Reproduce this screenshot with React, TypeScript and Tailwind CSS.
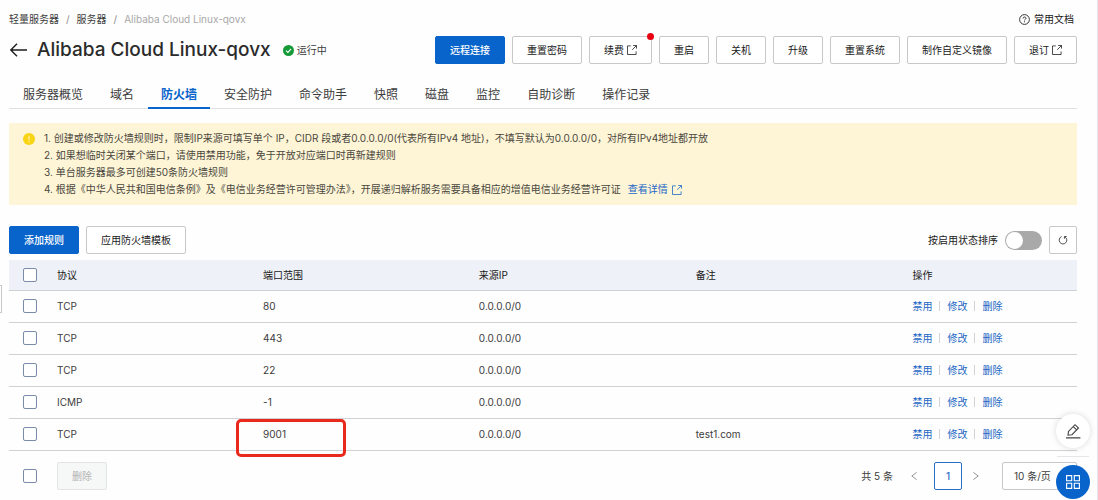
import React from "react";

type Rule = { protocol: string; port: string; source: string; remark: string; marked?: boolean };

const rules: Rule[] = [
  { protocol: "TCP", port: "80", source: "0.0.0.0/0", remark: "" },
  { protocol: "TCP", port: "443", source: "0.0.0.0/0", remark: "" },
  { protocol: "TCP", port: "22", source: "0.0.0.0/0", remark: "" },
  { protocol: "ICMP", port: "-1", source: "0.0.0.0/0", remark: "" },
  { protocol: "TCP", port: "9001", source: "0.0.0.0/0", remark: "test1.com", marked: true },
];

const tabs = ["服务器概览", "域名", "防火墙", "安全防护", "命令助手", "快照", "磁盘", "监控", "自助诊断", "操作记录"];

function ExternalIcon() {
  return (
    <svg className="size-[10px] shrink-0" viewBox="0 0 10 10" fill="none" stroke="currentColor" strokeWidth="0.8" aria-hidden="true">
      <path d="M3.8 0.9H0.5V9.5H9.1V6.4M6.2 0.5H9.5V3.6M9.5 0.5L5.2 4.8" />
    </svg>
  );
}

function Button({
  children,
  primary = false,
  external = false,
  dot = false,
}: {
  children: React.ReactNode;
  primary?: boolean;
  external?: boolean;
  dot?: boolean;
}) {
  return (
    <button
      type="button"
      className={
        primary
          ? "flex h-7 shrink-0 items-center rounded-xs border border-[#0864cb] bg-[#0864cb] px-3.5 font-medium text-white"
          : "relative flex h-7 shrink-0 items-center gap-[3px] rounded-xs border border-[#c8c8ca] bg-white px-3.5 text-[#202020]"
      }
    >
      {children}
      {external && <ExternalIcon />}
      {dot && <span className="absolute -top-1 -right-[3px] size-[7px] rounded-full bg-[#e60012]" />}
    </button>
  );
}

function Checkbox({ label }: { label: string }) {
  return (
    <input
      type="checkbox"
      aria-label={label}
      className="block size-3.5 appearance-none rounded-xs border border-[#7c8ba8] bg-white checked:bg-[#0864cb]"
    />
  );
}

function RowActions() {
  return (
    <div className="flex items-center gap-[7px] text-[#1c66c4]">
      <a href="#disable">禁用</a>
      <span className="h-2.5 w-px bg-[#d3d3d6]" />
      <a href="#edit">修改</a>
      <span className="h-2.5 w-px bg-[#d3d3d6]" />
      <a href="#delete">删除</a>
    </div>
  );
}

export default function App() {
  return (
    <div className="relative min-h-screen border-r border-[#e6e6ea] bg-[#fefefe] pr-5 pb-2 pl-[9px] font-[Inter,'Noto_Sans_CJK_SC',sans-serif] text-[10px] leading-4 text-[#3c3c3c]">
      <div className="absolute top-[285px] left-0 h-7 w-0.5 border-y border-r border-[#c8c8ca]" />

      <div className="flex items-center justify-between pt-[11px]">
        <nav aria-label="导航路径" className="flex items-center gap-[7px]">
          <a href="#swas">轻量服务器</a>
          <span className="text-[#8a8a8a]">/</span>
          <a href="#servers">服务器</a>
          <span className="text-[#8a8a8a]">/</span>
          <span className="text-[#a8a8a8]">Alibaba Cloud Linux-qovx</span>
        </nav>
        <a href="#docs" className="flex items-center gap-1 pr-[3px] text-[#202020]">
          <svg className="size-[11px]" viewBox="0 0 11 11" fill="none" stroke="currentColor" strokeWidth="0.9" aria-hidden="true">
            <circle cx="5.5" cy="5.5" r="4.9" />
            <path d="M4 4.5C4 3.5 4.7 3 5.5 3S7 3.5 7 4.3C7 5.2 5.5 5.3 5.5 6.4M5.5 7.3V8.3" />
          </svg>
          常用文档
        </a>
      </div>

      <header className="mt-[9px] flex items-center justify-between">
        <div className="flex items-center">
          <button type="button" aria-label="返回" className="text-[#1c1c1c]">
            <svg className="h-3.5 w-[18px]" viewBox="0 0 18 14" fill="none" stroke="currentColor" strokeWidth="1.4" aria-hidden="true">
              <path d="M18 7H2M8 0.8L1.8 7L8 13.2" />
            </svg>
          </button>
          <h1 className="ml-2.5 text-[19px] leading-7 font-medium text-[#2b2b2b]">Alibaba Cloud Linux-qovx</h1>
          <svg className="ml-3 size-[11px]" viewBox="0 0 11 11" aria-hidden="true">
            <circle cx="5.5" cy="5.5" r="5.5" fill="#159a38" />
            <path d="M3 5.6L4.9 7.4L8.1 3.9" fill="none" stroke="#fff" strokeWidth="1.1" />
          </svg>
          <span className="ml-[3px]">运行中</span>
        </div>
        <div className="flex items-center gap-[7px]">
          <Button primary>远程连接</Button>
          <Button>重置密码</Button>
          <Button external dot>续费</Button>
          <Button>重启</Button>
          <Button>关机</Button>
          <Button>升级</Button>
          <Button>重置系统</Button>
          <Button>制作自定义镜像</Button>
          <Button external>退订</Button>
        </div>
      </header>

      <nav aria-label="服务器功能" className="mt-4 flex gap-px border-b border-[#e0e0e2] pl-px text-xs leading-4">
        {tabs.map((tab) => (
          <a
            key={tab}
            href={`#${tab}`}
            className={
              tab === "防火墙"
                ? "-mb-px border-b-2 border-[#0864cb] px-[13px] pt-[7px] pb-1 font-bold text-[#0864cb]"
                : "-mb-px border-b-2 border-transparent px-[13px] pt-[7px] pb-1"
            }
          >
            {tab}
          </a>
        ))}
      </nav>

      <section className="mt-3.5 flex bg-[#fef5d6] px-3.5 py-[7px] leading-[17px] text-[#4a473e]">
        <svg className="mt-[3px] size-3 shrink-0" viewBox="0 0 12 12" aria-hidden="true">
          <circle cx="6" cy="6" r="6" fill="#f8d414" />
          <path d="M6 2.7V6.9M6 8.1V9.3" stroke="#fff3bd" strokeWidth="1.1" />
        </svg>
        <ol className="ml-[9px]">
          <li>1. 创建或修改防火墙规则时，限制IP来源可填写单个 IP，CIDR 段或者0.0.0.0/0(代表所有IPv4 地址)，不填写默认为0.0.0.0/0，对所有IPv4地址都开放</li>
          <li>2. 如果想临时关闭某个端口，请使用禁用功能，免于开放对应端口时再新建规则</li>
          <li>3. 单台服务器最多可创建50条防火墙规则</li>
          <li className="flex items-center">
            4. 根据《中华人民共和国电信条例》及《电信业务经营许可管理办法》，开展递归解析服务需要具备相应的增值电信业务经营许可证
            <a href="#details" className="ml-[7px] flex items-center gap-1 text-[#1c68c8]">
              查看详情
              <ExternalIcon />
            </a>
          </li>
        </ol>
      </section>

      <div className="mt-[21px] flex items-center justify-between">
        <div className="flex gap-[7px]">
          <Button primary>添加规则</Button>
          <Button>应用防火墙模板</Button>
        </div>
        <div className="flex items-center gap-[7px]">
          <label htmlFor="sort-enabled" className="text-[#202020]">按启用状态排序</label>
          <input
            id="sort-enabled"
            type="checkbox"
            role="switch"
            className="h-[19px] w-[37px] appearance-none rounded-full bg-[#a9a9a9] p-px before:block before:size-[17px] before:rounded-full before:bg-white before:content-[''] checked:bg-[#0864cb] checked:before:ml-auto"
          />
          <button type="button" aria-label="刷新" className="flex size-7 items-center justify-center rounded-xs border border-[#c8c8ca] bg-white text-[#3c3c3c]">
            <svg className="size-2.5" viewBox="0 0 10 10" fill="none" stroke="currentColor" strokeWidth="0.9" aria-hidden="true">
              <path d="M3.6 1.6A3.8 3.8 0 1 0 6.8 1.8M6.4 3.7V1.5H8.6" />
            </svg>
          </button>
        </div>
      </div>

      <table className="mt-1.5 w-full table-fixed border-collapse text-left">
        <colgroup>
          <col className="w-[34px]" />
          <col className="w-[19.3%]" />
          <col className="w-[20.2%]" />
          <col className="w-[20.3%]" />
          <col className="w-[20.3%]" />
          <col />
        </colgroup>
        <thead>
          <tr className="h-[30px] border-b border-[#d0d1d5] bg-[#eef1f7] text-[#202020]">
            <th className="pl-3.5"><Checkbox label="全选" /></th>
            <th className="px-3.5 font-normal">协议</th>
            <th className="px-3.5 font-normal">端口范围</th>
            <th className="px-3.5 font-normal">来源IP</th>
            <th className="px-3.5 font-normal">备注</th>
            <th className="px-3.5 font-normal">操作</th>
          </tr>
        </thead>
        <tbody>
          {rules.map((rule) => (
            <tr key={rule.port} className="h-8 border-b border-[#d0d1d5]">
              <td className="pl-3.5"><Checkbox label={`选择端口 ${rule.port}`} /></td>
              <td className="px-3.5">{rule.protocol}</td>
              <td className="relative px-3.5">
                {rule.port}
                {rule.marked && (
                  <span className="pointer-events-none absolute top-0 -left-[13px] h-[38px] w-[110px] rounded-[5px] border-[3px] border-[#e8291c]" />
                )}
              </td>
              <td className="px-3.5">{rule.source}</td>
              <td className="px-3.5">{rule.remark}</td>
              <td className="px-3.5"><RowActions /></td>
            </tr>
          ))}
        </tbody>
      </table>

      <footer className="mt-[11px] flex items-center justify-between pl-3.5">
        <div className="flex items-center gap-5">
          <Checkbox label="选择全部规则" />
          <button type="button" disabled className="h-7 rounded-xs border border-[#e3e4e6] bg-[#f6f7f7] px-3.5 text-[#b4b4b4]">删除</button>
        </div>
        <div className="flex items-center">
          <span>共 5 条</span>
          <button type="button" aria-label="上一页" className="flex h-7 w-[41px] items-center justify-center text-[#8a8a8a]">
            <svg className="h-2 w-1.5" viewBox="0 0 6 8" fill="none" stroke="currentColor" strokeWidth="0.9" aria-hidden="true">
              <path d="M5.6 0.4L0.8 4L5.6 7.6" />
            </svg>
          </button>
          <button type="button" aria-current="page" className="size-7 rounded-xs border border-[#2a6fc4] bg-white font-medium text-[#2a6fc4]">1</button>
          <button type="button" aria-label="下一页" className="flex h-7 w-7 items-center justify-center text-[#8a8a8a]">
            <svg className="h-2 w-1.5" viewBox="0 0 6 8" fill="none" stroke="currentColor" strokeWidth="0.9" aria-hidden="true">
              <path d="M0.4 0.4L5.2 4L0.4 7.6" />
            </svg>
          </button>
          <select aria-label="每页条数" className="ml-3 h-7 w-[75px] appearance-none rounded-xs border border-[#c8c8ca] bg-white pl-[11px]">
            <option>10 条/页</option>
            <option>20 条/页</option>
            <option>50 条/页</option>
          </select>
        </div>
      </footer>

      <aside className="fixed right-2 bottom-px flex flex-col items-center gap-2">
        <button type="button" aria-label="反馈" className="flex size-[34px] items-center justify-center rounded-full bg-white text-[#444] shadow-[0_0_6px_rgba(0,0,0,0.15)]">
          <svg className="size-4" viewBox="0 0 16 16" fill="none" stroke="currentColor" strokeWidth="1.1" aria-hidden="true">
            <path d="M3 12.2L3.5 8.4L10 1.7L13.5 5L7 11.7L3 12.2ZM8.2 3.6L11.7 6.9M1 14.9H15.4" />
          </svg>
        </button>
        <span className="h-px w-8 bg-[#e6e6ea]" />
        <button type="button" aria-label="应用" className="flex size-[34px] items-center justify-center rounded-full bg-[#0864cb] text-white">
          <svg className="size-3.5" viewBox="0 0 14 14" fill="none" stroke="currentColor" strokeWidth="1.1" aria-hidden="true">
            <path d="M0.6 0.6H5.7V5.7H0.6ZM8.3 0.6H13.4V5.7H8.3ZM0.6 8.3H5.7V13.4H0.6ZM8.3 8.3H13.4V13.4H8.3Z" />
          </svg>
        </button>
      </aside>
    </div>
  );
}
